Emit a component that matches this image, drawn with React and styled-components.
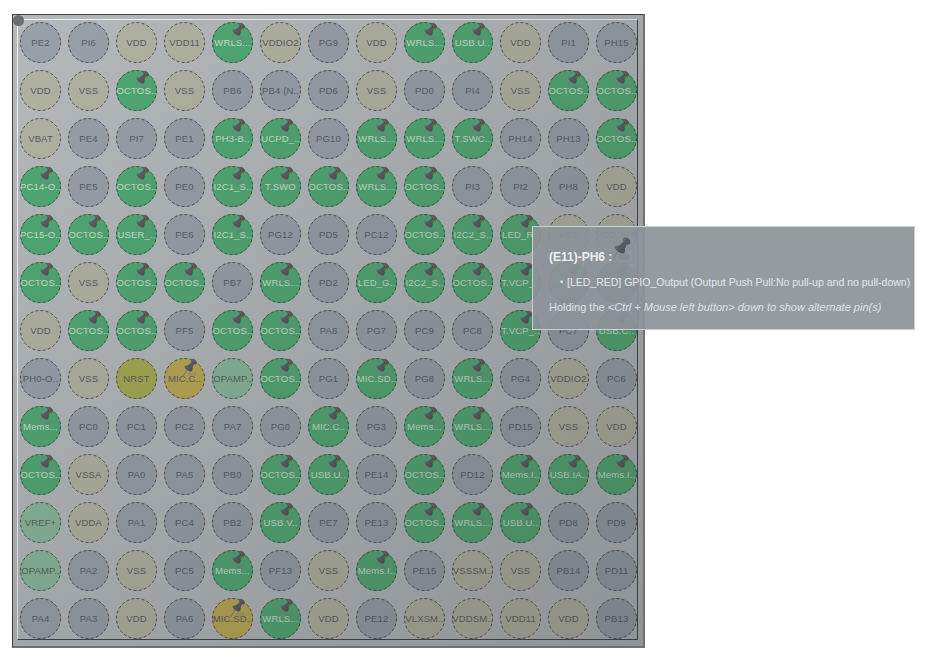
import React from "react";
import styled, { createGlobalStyle } from "styled-components";

const Global = createGlobalStyle`
  html, body { margin: 0; padding: 0; background: #fff; }
  body { font-family: "Liberation Sans", Arial, sans-serif; }
`;

const Page = styled.div`
  position: relative;
  width: 930px;
  height: 657px;
  padding: 14px 0 0 12px;
  box-sizing: border-box;
  overflow: hidden;
`;

const Frame = styled.div`
  position: relative;
  width: 633px;
  height: 634px;
  box-sizing: border-box;
  padding: 4px 5px 6px 4px;
  border: 1px solid #3c3e40;
  border-right-width: 2px;
  border-bottom-width: 2px;
  border-right-color: #6f7273;
  border-bottom-color: #6f7273;
  background: #b5b9bc;
`;

const Dim = styled.div`
  position: absolute;
  inset: 0;
  pointer-events: none;
  background: linear-gradient(135deg, rgba(50, 50, 50, 0) 0%, rgba(50, 50, 50, 0.28) 100%);
`;

const Bevel = styled.div`
  height: 100%;
  box-sizing: border-box;
  padding: 2px 0 0 2px;
  border-style: solid;
  border-width: 1px;
  border-color: #f2f4f4 #3e4142 #3e4142 #f2f4f4;
`;

const Corner = styled.span`
  position: absolute;
  left: 0;
  top: 0;
  width: 11px;
  height: 11px;
  border-radius: 50%;
  background: #6b6e70;
`;

const Grid = styled.div`
  display: grid;
  grid-template-columns: repeat(13, 41px);
  grid-auto-rows: 41px;
  gap: 7px;
`;

const fills = {
  io: "#98a0aa",
  power: "#b2b3a2",
  pin: "#50a874",
  sys: "#a5ab52",
  warn: "#bba954",
  analog: "#87b89b",
};

const Circle = styled.div`
  position: relative;
  width: 41px;
  height: 41px;
  border-radius: 50%;
  background: ${(p) => fills[p.$kind]};
  display: flex;
  align-items: center;
  justify-content: center;
`;

const RingSvg = styled.svg`
  position: absolute;
  inset: 0;
  width: 41px;
  height: 41px;
`;

const Ring = () => (
  <RingSvg viewBox="0 0 41 41">
    <circle cx="20.5" cy="20.5" r="20" fill="none" stroke="#44474a" strokeWidth="0.9" strokeDasharray="3 2.2" />
  </RingSvg>
);

const Label = styled.span`
  font-size: 9.5px;
  line-height: 12px;
  letter-spacing: 0.15px;
  white-space: nowrap;
  color: ${(p) => (p.$light ? "#c9e0d1" : "#585d61")};
`;

const PinSvg = styled.svg`
  position: absolute;
  left: ${(p) => p.$left}px;
  top: ${(p) => p.$top}px;
  width: ${(p) => p.$size}px;
  height: ${(p) => p.$size * 1.2}px;
`;

const Pin = ({ id, left = 17, top = 0, size = 17 }) => (
  <PinSvg viewBox="0 0 20 24" $left={left} $top={top} $size={size}>
    <defs>
      <linearGradient id={id} x1="0" y1="0" x2="1" y2="1">
        <stop offset="0" stopColor="#9a9da0" />
        <stop offset="0.45" stopColor="#5c5f61" />
        <stop offset="1" stopColor="#434547" />
      </linearGradient>
    </defs>
    <ellipse cx="13" cy="19" rx="5" ry="3" fill="#777" opacity="0.22" />
    <path d="M7 14 L2 22.5" stroke="#7f8385" strokeWidth="1.2" opacity="0.85" />
    <path
      d="M12 1.5 C13.5 0.6 15.5 1 17 2.5 C18.5 4 19 6 18 7.3 C17 8 16 7.8 15.2 7.5 L13.5 11.5 C14 13 13.5 14.8 12.5 15.8 C9.5 16 5.5 13.5 3.8 10.2 C4.6 9 6.5 8.3 8.2 8.6 L12.3 5 C11.6 3.8 11.3 2.5 12 1.5 Z"
      fill={`url(#${id})`}
    />
  </PinSvg>
);

const rows = [
  "PE2,PI6,VDD,VDD11,WRLS...*,VDDIO2,PG9,VDD,WRLS...*,USB.U..*,VDD,PI1,PH15",
  "VDD,VSS,OCTOS..*,VSS,PB6,PB4 (N..,PD6,VSS,PD0,PI4,VSS,OCTOS..*,OCTOS..*",
  "VBAT,PE4,PI7,PE1,PH3-B..*,UCPD_..*,PG10,WRLS...*,WRLS...*,T.SWC..*,PH14,PH13,OCTOS..*",
  "PC14-O..*,PE5,OCTOS..*,PE0,I2C1_S..*,T.SWO*,OCTOS..*,WRLS...*,OCTOS..*,PI3,PI2,PH8,VDD",
  "PC15-O..*,OCTOS..*,USER_..*,PE6,I2C1_S..*,PG12,PD5,PC12,OCTOS..*,I2C2_S..*,LED_R..*,VSS,VDDUSB",
  "OCTOS..*,VSS,OCTOS..*,OCTOS..*,PB7,WRLS...*,PD2,LED_G..*,I2C2_S..*,OCTOS..*,T.VCP_..*,USB.C..*,USB.C..*",
  "VDD,OCTOS..*,OCTOS..*,PF5,OCTOS..*,OCTOS..*,PA8,PG7,PC9,PC8,T.VCP_..*,PC7,USB.C..*",
  "PH0-O..,VSS,NRST#sys,MIC.C..#warn*,OPAMP..#analog,OCTOS..*,PG1,MIC.SD..*,PG8,WRLS...*,PG4,VDDIO2,PC6",
  "Mems...*,PC0,PC1,PC2,PA7,PG0,MIC.C..*,PG3,Mems...*,WRLS...*,PD15,VSS,VDD",
  "OCTOS..*,VSSA,PA0,PA5,PB0,OCTOS..*,USB.U..*,PE14,OCTOS..*,PD12,Mems.I..*,USB.IA..*,Mems.I..*",
  "VREF+#analog,VDDA,PA1,PC4,PB2,USB.V..*,PE7,PE13,OCTOS..*,WRLS...*,USB.U..*,PD8,PD9",
  "OPAMP..#analog,PA2,VSS,PC5,Mems...*,PF13,VSS,Mems.I..*,PE15,VSSSM..,VSS,PB14,PD11",
  "PA4,PA3,VDD,PA6,MIC.SD..#warn*,WRLS...*,VDD,PE12,VLXSM..,VDDSM..,VDD11,VDD,PB13",
];

const powerName = /^(VDD|VSS|VBAT|VLX)/;

const parse = (token) => {
  const pinned = token.endsWith("*");
  const [name, forced] = token.replace(/\*$/, "").split("#");
  const kind = forced || (pinned ? "pin" : powerName.test(name) ? "power" : "io");
  return { name, kind, pinned };
};

const pins = rows.flatMap((r) => r.split(",").map(parse));

const Tooltip = styled.div`
  position: absolute;
  left: 532px;
  top: 226px;
  width: 383px;
  height: 104px;
  box-sizing: border-box;
  padding: 23px 0 0 16px;
  border: 1px solid #ccd0d3;
  background: rgba(141, 147, 152, 0.92);
  color: #e4e7e9;
`;

const TipTitle = styled.div`
  font-size: 12px;
  font-weight: bold;
  line-height: 14px;
  color: #eceeef;
`;

const TipList = styled.ul`
  margin: 12px 0 0;
  padding: 0 0 0 18px;
  list-style: none;
  font-size: 10.5px;
  line-height: 13px;
  white-space: nowrap;
  position: relative;
  &::before {
    content: "•";
    position: absolute;
    left: 11px;
    top: 0;
    font-size: 9px;
  }
`;

const TipNote = styled.div`
  margin-top: 12px;
  line-height: 13px;
  font-size: 11px;
  white-space: nowrap;
  color: #dfe2e4;
  em {
    font-style: italic;
  }
`;

const App = () => (
  <Page>
    <Global />
    <Frame>
      <Bevel>
        <Grid>
          {pins.map((p, i) => (
            <Circle key={i} $kind={p.kind}>
              <Ring />
              <Label $light={p.kind === "pin"}>{p.name}</Label>
              {p.pinned && <Pin id={`pin-${i}`} />}
            </Circle>
          ))}
        </Grid>
      </Bevel>
      <Corner />
      <Dim />
    </Frame>
    <Tooltip>
      <TipTitle>(E11)-PH6 :</TipTitle>
      <Pin id="pin-tip" left={77} top={9} size={22} />
      <TipList>
        <li>[LED_RED] GPIO_Output (Output Push Pull:No pull-up and no pull-down)</li>
      </TipList>
      <TipNote>
        Holding the <em>&lt;Ctrl + Mouse left button&gt; down to show alternate pin(s)</em>
      </TipNote>
    </Tooltip>
  </Page>
);

export default App;
